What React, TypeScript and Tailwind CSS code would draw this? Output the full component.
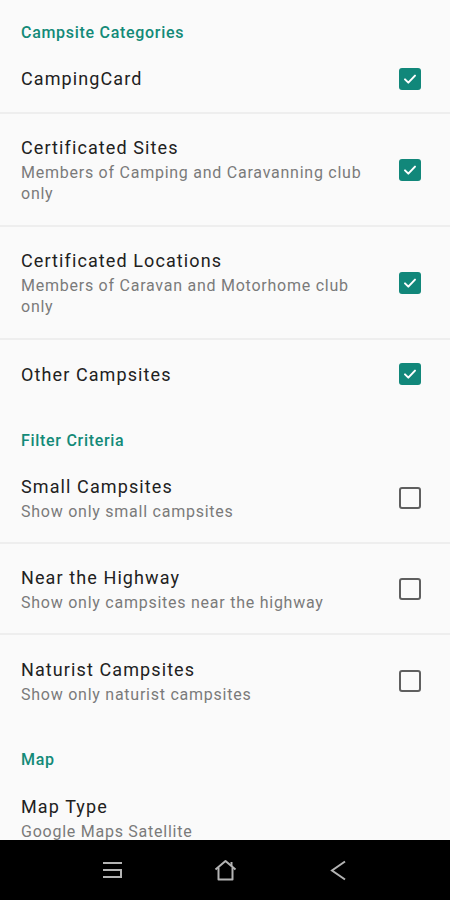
import React from "react";

type Pref = {
  title: string;
  summary?: string;
  checked?: boolean;
  checkbox?: boolean;
};

type Category = {
  name: string;
  items: Pref[];
};

const categories: Category[] = [
  {
    name: "Campsite Categories",
    items: [
      { title: "CampingCard", checked: true, checkbox: true },
      {
        title: "Certificated Sites",
        summary: "Members of Camping and Caravanning club only",
        checked: true,
        checkbox: true,
      },
      {
        title: "Certificated Locations",
        summary: "Members of Caravan and Motorhome club only",
        checked: true,
        checkbox: true,
      },
      { title: "Other Campsites", checked: true, checkbox: true },
    ],
  },
  {
    name: "Filter Criteria",
    items: [
      { title: "Small Campsites", summary: "Show only small campsites", checkbox: true },
      { title: "Near the Highway", summary: "Show only campsites near the highway", checkbox: true },
      { title: "Naturist Campsites", summary: "Show only naturist campsites", checkbox: true },
    ],
  },
  {
    name: "Map",
    items: [{ title: "Map Type", summary: "Google Maps Satellite" }],
  },
];

const CheckBox = ({ checked }: { checked?: boolean }) =>
  checked ? (
    <div className="flex h-[22px] w-[22px] shrink-0 items-center justify-center rounded-[3px] bg-[#11877a]">
      <svg width="16" height="16" viewBox="0 0 24 24" fill="none">
        <path d="M4.5 12.5l5 5L19.5 7" stroke="white" strokeWidth="3" strokeLinecap="round" strokeLinejoin="round" />
      </svg>
    </div>
  ) : (
    <div className="h-[22px] w-[22px] shrink-0 rounded-[3px] border-2 border-[#5f5f5f]" />
  );

const rowPad = (pref: Pref, last: boolean) => {
  if (!pref.summary) return last ? "min-h-[68px]" : "min-h-[67px]";
  if (pref.summary.length > 40) return "py-[21px]";
  return last ? "py-[22px]" : "pt-[21px] pb-[20px]";
};

const PrefRow = ({ pref, last }: { pref: Pref; last: boolean }) => (
  <div className={`flex items-center pl-[21px] pr-[29px] ${rowPad(pref, last)}`}>
    <div className="min-w-0 flex-1 pr-[20px]">
      <div className="text-[18px] leading-[25px] tracking-[1.1px] text-[#212121]">{pref.title}</div>
      {pref.summary && (
        <div className="mt-[2px] text-[16px] leading-[21px] tracking-[0.75px] text-[#7a7a7a]">{pref.summary}</div>
      )}
    </div>
    {pref.checkbox && <CheckBox checked={pref.checked} />}
  </div>
);

const NavBar = () => (
  <div className="flex h-[60px] shrink-0 items-center justify-center bg-black">
    <div className="flex w-[113px] justify-center">
      <svg width="21" height="18" viewBox="0 0 21 18" fill="none" stroke="#b4b4b4" strokeWidth="2">
        <path d="M1 2h19" />
        <path d="M1 9h18v7H1" />
      </svg>
    </div>
    <div className="flex w-[113px] justify-center">
      <svg width="23" height="22" viewBox="0 0 23 22" fill="none" stroke="#b4b4b4" strokeWidth="2" strokeLinejoin="round">
        <path d="M1.5 10.5L11.5 2l10 8.5" />
        <path d="M4.5 8.5V20.5h14V8.5" />
        <path d="M17.5 3v4" />
      </svg>
    </div>
    <div className="flex w-[113px] justify-center">
      <svg width="16" height="21" viewBox="0 0 16 21" fill="none" stroke="#b4b4b4" strokeWidth="2">
        <path d="M15 1.5L2 10.5l13 9" />
      </svg>
    </div>
  </div>
);

export default function App() {
  return (
    <div
      className="flex h-[900px] w-[450px] flex-col overflow-hidden bg-[#fafafa]"
      style={{ fontFamily: "Roboto, 'Noto Sans', sans-serif" }}
    >
      <div className="flex-1 overflow-hidden">
        {categories.map((cat) => (
          <div key={cat.name}>
            <div className="pl-[21px] pt-[24px] pb-[3px] text-[16px] font-medium leading-[18px] tracking-[0.7px] text-[#138a78]">
              {cat.name}
            </div>
            {cat.items.map((item, i) => {
              const last = i === cat.items.length - 1;
              return (
                <div key={item.title} className={last ? "" : "border-b-2 border-[#eeeeee]"}>
                  <PrefRow pref={item} last={last} />
                </div>
              );
            })}
          </div>
        ))}
      </div>
      <NavBar />
    </div>
  );
}
